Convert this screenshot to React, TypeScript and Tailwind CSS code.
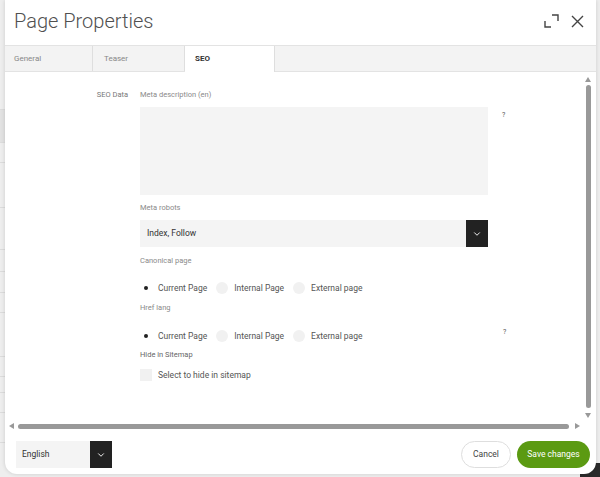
import { ChevronDown } from "lucide-react";

const bgRows = [110, 33, 20, 45, 42, 22, 21, 20, 44, 20, 16, 20, 30];

function Radio({ label, checked }: { label: string; checked?: boolean }) {
  return (
    <label className="flex items-center gap-[6px]">
      {checked ? (
        <span className="flex h-[12px] w-[12px] items-center justify-center rounded-full bg-white">
          <span className="h-[4px] w-[4px] rounded-full bg-[#222]" />
        </span>
      ) : (
        <span className="h-[12px] w-[12px] rounded-full bg-[#f1f1f1]" />
      )}
      <span className="text-[8.5px] leading-[12px] text-[#555]">{label}</span>
    </label>
  );
}

function RadioGroup() {
  return (
    <div className="flex h-[14px] items-center gap-[9px]">
      <Radio label="Current Page" checked />
      <Radio label="Internal Page" />
      <Radio label="External page" />
    </div>
  );
}

function Label({ children, className = "" }: { children: React.ReactNode; className?: string }) {
  return <div className={`text-[7.5px] leading-[12px] text-[#8a8a8a] ${className}`}>{children}</div>;
}

function Help({ className = "" }: { className?: string }) {
  return <span className={`ml-[14px] text-[7px] leading-[10px] text-[#555] ${className}`}>?</span>;
}

export default function App() {
  return (
    <div className="relative h-[477px] w-[600px] overflow-hidden bg-[#eeeeee] font-[Roboto,sans-serif]">
      {/* page behind the modal */}
      <div className="flex w-[40px] flex-col">
        {bgRows.map((h, i) => (
          <div
            key={i}
            style={{ height: h }}
            className={`border-b border-[#dcdcdc] ${i === 1 ? "bg-[#e2e2e2]" : ""}`}
          />
        ))}
      </div>
      <div className="absolute bottom-0 right-0 h-[14px] w-[20px] bg-[#2a2a2a]" />

      <div className="absolute left-[5px] top-0 flex h-[474px] w-[591px] flex-col overflow-hidden rounded-b-[12px] bg-white shadow-[0_0_4px_rgba(0,0,0,0.15)]">
        {/* header */}
        <div className="flex h-[45px] items-center justify-between pb-[3px] pl-[9px] pr-[12px]">
          <h1 className="text-[20px] font-light leading-none text-[#505050]">Page Properties</h1>
          <div className="flex items-center gap-[12px] text-[#444]">
            <svg width="15" height="14" viewBox="0 0 15 14" fill="none" stroke="currentColor" strokeWidth="1.4">
              <path d="M1 7v6h6" />
              <path d="M8 1h6v6" />
            </svg>
            <svg width="13" height="13" viewBox="0 0 13 13" fill="none" stroke="currentColor" strokeWidth="1.4">
              <path d="M1 1l11 11M12 1L1 12" />
            </svg>
          </div>
        </div>

        {/* tabs */}
        <div className="flex h-[27px] border-y border-[#e3e3e3] bg-[#f3f3f3]">
          <div className="flex w-[88px] items-center border-r border-[#dedede] pl-[9px] text-[8px] text-[#888]">General</div>
          <div className="flex w-[92px] items-center border-r border-[#dedede] pl-[11px] text-[8px] text-[#888]">Teaser</div>
          <div className="-mb-px flex w-[90px] items-center border-r border-[#dedede] bg-white pl-[10px] text-[8px] font-bold text-[#333]">SEO</div>
        </div>

        {/* body */}
        <div className="flex flex-1 flex-col">
          <div className="flex flex-1">
            <div className="flex flex-1 pt-[17px]">
              <div className="w-[123px] pr-0 text-right text-[7.5px] leading-[12px] text-[#777]">SEO Data</div>
              <div className="ml-[12px] flex flex-col">
                <Label>Meta description (en)</Label>
                <div className="mt-[6px] flex items-start">
                  <div className="h-[88px] w-[348px] bg-[#f4f4f4]" />
                  <Help className="mt-[3px]" />
                </div>
                <Label className="mt-[7px]">Meta robots</Label>
                <div className="mt-[6px] flex h-[27px] w-[348px] items-center bg-[#f4f4f4]">
                  <span className="flex-1 pl-[7px] text-[8.5px] text-[#333]">Index, Follow</span>
                  <span className="flex h-full w-[22px] items-center justify-center bg-[#222]">
                    <ChevronDown size={10} strokeWidth={2.2} color="#fff" />
                  </span>
                </div>
                <Label className="mt-[8px]">Canonical page</Label>
                <div className="mt-[14px]">
                  <RadioGroup />
                </div>
                <Label className="mt-[7px]">Href lang</Label>
                <div className="mt-[15px] flex w-[400px] items-start">
                  <div className="w-[348px]">
                    <RadioGroup />
                  </div>
                  <Help className="-mt-[2px] ml-[15px]" />
                </div>
                <Label className="mt-[6px] text-[#666]">Hide in Sitemap</Label>
                <label className="mt-[8px] flex items-center gap-[6px]">
                  <span className="h-[12px] w-[12px] bg-[#f1f1f1]" />
                  <span className="text-[8.5px] leading-[12px] text-[#555]">Select to hide in sitemap</span>
                </label>
              </div>
            </div>
            {/* vertical scrollbar */}
            <div className="flex w-[16px] flex-col items-center pt-[5px]">
              <svg width="6" height="5" viewBox="0 0 6 5"><path d="M3 0L6 5H0z" fill="#999" /></svg>
              <div className="mt-[3px] h-[323px] w-[5px] rounded-full bg-[#999]" />
              <svg className="mt-[5px]" width="6" height="5" viewBox="0 0 6 5"><path d="M0 0h6L3 5z" fill="#999" /></svg>
            </div>
          </div>
          {/* horizontal scrollbar */}
          <div className="flex h-[14px] items-center pl-[4px]">
            <svg width="5" height="6" viewBox="0 0 5 6"><path d="M5 0v6L0 3z" fill="#999" /></svg>
            <div className="ml-[4px] h-[5px] w-[551px] rounded-full bg-[#999]" />
            <svg className="ml-[6px]" width="5" height="6" viewBox="0 0 5 6"><path d="M0 0v6l5-3z" fill="#999" /></svg>
          </div>
        </div>

        {/* footer */}
        <div className="flex h-[41px] items-start justify-between pl-[11px] pr-[6px] pt-[8px]">
          <div className="flex h-[27px] w-[96px] items-center bg-[#f4f4f4]">
            <span className="flex-1 pl-[6px] text-[8.5px] text-[#333]">English</span>
            <span className="flex h-full w-[22px] items-center justify-center bg-[#222]">
              <ChevronDown size={10} strokeWidth={2.2} color="#fff" />
            </span>
          </div>
          <div className="flex gap-[6px]">
            <button className="h-[27px] w-[50px] rounded-full border border-[#dedede] bg-white text-[8.5px] text-[#444]">Cancel</button>
            <button className="h-[27px] w-[73px] rounded-full bg-[#5b9a12] text-[8.5px] text-white">Save changes</button>
          </div>
        </div>
      </div>
    </div>
  );
}
